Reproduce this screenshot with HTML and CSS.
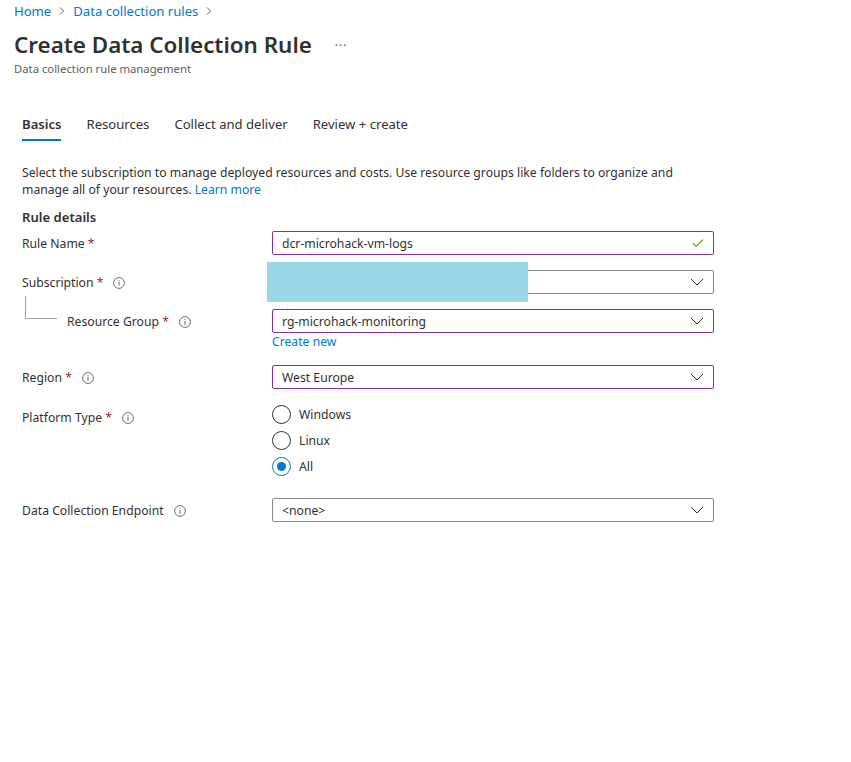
FILE: index.html
```html
<!DOCTYPE html>
<html lang="en">
<head>
<meta charset="utf-8">
<title>Create Data Collection Rule</title>
<link rel="stylesheet" href="styles.css">
</head>
<body>
<div class="page">
  <nav class="breadcrumb">
    <a class="crumb" href="#">Home</a>
    <svg class="crumb-sep" width="12" height="12" viewBox="0 0 12 12"><path d="M4 2.5 L7.5 6 L4 9.5" fill="none" stroke="#605e5c" stroke-width="1"/></svg>
    <a class="crumb" href="#">Data collection rules</a>
    <svg class="crumb-sep" width="12" height="12" viewBox="0 0 12 12"><path d="M4 2.5 L7.5 6 L4 9.5" fill="none" stroke="#605e5c" stroke-width="1"/></svg>
  </nav>
  <div class="title-row">
    <h1 class="title">Create Data Collection Rule</h1>
    <span class="more">&middot;&middot;&middot;</span>
  </div>
  <div class="subtitle">Data collection rule management</div>

  <div class="content">
    <div class="tabs">
      <div class="tab active">Basics</div>
      <div class="tab">Resources</div>
      <div class="tab">Collect and deliver</div>
      <div class="tab">Review + create</div>
    </div>

    <p class="desc">Select the subscription to manage deployed resources and costs. Use resource groups like folders to organize and manage all of your resources. <a href="#" class="link">Learn more</a></p>

    <h2 class="section">Rule details</h2>

    <div class="row r1">
      <div class="label">Rule Name <span class="req">*</span></div>
      <div class="control">
        <div class="input purple">
          <span class="value">dcr-microhack-vm-logs</span>
          <svg class="check" width="12" height="10" viewBox="0 0 12 10"><path d="M1 5.2 L4.2 8.4 L11 1.6" fill="none" stroke="#57a300" stroke-width="1.2"/></svg>
        </div>
      </div>
    </div>

    <div class="row r2">
      <div class="label">Subscription <span class="req">*</span><svg class="info" width="12" height="12" viewBox="0 0 12 12"><circle cx="6" cy="6" r="5.4" fill="none" stroke="#605e5c" stroke-width="0.9"/><rect x="5.5" y="5" width="1" height="3.6" fill="#605e5c"/><circle cx="6" cy="3.6" r="0.6" fill="#605e5c"/></svg></div>
      <div class="control">
        <div class="input gray">
          <span class="value"></span>
          <svg class="chev" width="14" height="8" viewBox="0 0 14 8"><path d="M1 1 L7 7 L13 1" fill="none" stroke="#323130" stroke-width="1"/></svg>
          <div class="redact"></div>
        </div>
      </div>
    </div>

    <div class="row r3">
      <div class="label sub">
        <span class="tree"></span>
        <span class="sub-text">Resource Group <span class="req">*</span><svg class="info" width="12" height="12" viewBox="0 0 12 12"><circle cx="6" cy="6" r="5.4" fill="none" stroke="#605e5c" stroke-width="0.9"/><rect x="5.5" y="5" width="1" height="3.6" fill="#605e5c"/><circle cx="6" cy="3.6" r="0.6" fill="#605e5c"/></svg></span>
      </div>
      <div class="control">
        <div class="input purple">
          <span class="value">rg-microhack-monitoring</span>
          <svg class="chev" width="14" height="8" viewBox="0 0 14 8"><path d="M1 1 L7 7 L13 1" fill="none" stroke="#323130" stroke-width="1"/></svg>
        </div>
        <a href="#" class="link create">Create new</a>
      </div>
    </div>

    <div class="row r4">
      <div class="label">Region <span class="req">*</span><svg class="info" width="12" height="12" viewBox="0 0 12 12"><circle cx="6" cy="6" r="5.4" fill="none" stroke="#605e5c" stroke-width="0.9"/><rect x="5.5" y="5" width="1" height="3.6" fill="#605e5c"/><circle cx="6" cy="3.6" r="0.6" fill="#605e5c"/></svg></div>
      <div class="control">
        <div class="input purple">
          <span class="value">West Europe</span>
          <svg class="chev" width="14" height="8" viewBox="0 0 14 8"><path d="M1 1 L7 7 L13 1" fill="none" stroke="#323130" stroke-width="1"/></svg>
        </div>
      </div>
    </div>

    <div class="row r5">
      <div class="label">Platform Type <span class="req">*</span><svg class="info" width="12" height="12" viewBox="0 0 12 12"><circle cx="6" cy="6" r="5.4" fill="none" stroke="#605e5c" stroke-width="0.9"/><rect x="5.5" y="5" width="1" height="3.6" fill="#605e5c"/><circle cx="6" cy="3.6" r="0.6" fill="#605e5c"/></svg></div>
      <div class="control radios">
        <div class="radio"><span class="circle"></span><span>Windows</span></div>
        <div class="radio"><span class="circle"></span><span>Linux</span></div>
        <div class="radio"><span class="circle on"></span><span>All</span></div>
      </div>
    </div>

    <div class="row r6">
      <div class="label">Data Collection Endpoint<svg class="info" width="12" height="12" viewBox="0 0 12 12"><circle cx="6" cy="6" r="5.4" fill="none" stroke="#605e5c" stroke-width="0.9"/><rect x="5.5" y="5" width="1" height="3.6" fill="#605e5c"/><circle cx="6" cy="3.6" r="0.6" fill="#605e5c"/></svg></div>
      <div class="control">
        <div class="input gray">
          <span class="value">&lt;none&gt;</span>
          <svg class="chev" width="14" height="8" viewBox="0 0 14 8"><path d="M1 1 L7 7 L13 1" fill="none" stroke="#323130" stroke-width="1"/></svg>
        </div>
      </div>
    </div>
  </div>
</div>
</body>
</html>
```

FILE: styles.css
```css
* { box-sizing: border-box; }
html, body { margin: 0; padding: 0; background: #fff; }
body {
  font-family: "Segoe UI", "Noto Sans", "Open Sans", sans-serif;
  color: #323130;
  font-size: 12.2px;
}
a { text-decoration: none; }
.page { padding: 0 14px; }

.breadcrumb {
  display: flex;
  align-items: center;
  height: 21px;
  padding-top: 1px;
  font-size: 13.1px;
  line-height: 20px;
}
.crumb { color: #0078d4; }
.crumb-sep { margin: 0 5px 0 5px; }

.title-row { display: flex; align-items: center; margin-top: 8px; height: 32px; }
.title {
  margin: 0;
  font-size: 22.4px;
  font-weight: 600;
  line-height: 32px;
  color: #323130;
}
.more { margin-left: 23px; color: #605e5c; font-size: 12px; letter-spacing: 1px; }
.subtitle { font-size: 11.3px; line-height: 16px; color: #605e5c; }

.content { padding-left: 8px; }

.tabs { display: flex; gap: 25px; margin-top: 37px; }
.tab {
  font-size: 13.1px;
  line-height: 20px;
  padding-bottom: 5px;
  border-bottom: 2px solid transparent;
  color: #323130;
}
.tab.active { font-weight: 600; border-bottom-color: #0078d4; }

.desc {
  margin: 23px 0 0;
  max-width: 692px;
  line-height: 17px;
  font-size: 12.2px;
}
.link { color: #0078d4; }

.section {
  margin: 9px 0 0;
  font-size: 13.1px;
  font-weight: 600;
  line-height: 20px;
}

.row { display: flex; align-items: flex-start; }
.r1 { margin-top: 4px; }
.r2, .r3 { margin-top: 15px; }
.r4 { margin-top: 15px; }
.r5 { margin-top: 16px; }
.r6 { margin-top: 22px; }

.label {
  width: 250px;
  flex: none;
  line-height: 22px;
  height: 24px;
  padding-top: 2px;
  white-space: nowrap;
}
.req { color: #a4262c; }
.info { margin-left: 10px; vertical-align: -2px; }
.label.sub { display: flex; align-items: flex-start; padding-top: 0; line-height: 24px; }
.sub-text { padding-top: 1px; }
.tree {
  display: block;
  flex: none;
  width: 32px;
  height: 23px;
  margin: -13px 10px 0 3px;
  border-left: 1px solid #a19f9d;
  border-bottom: 1px solid #a19f9d;
}

.control { width: 442px; flex: none; display: flex; flex-direction: column; }
.input {
  position: relative;
  height: 24px;
  display: flex;
  align-items: center;
  justify-content: space-between;
  padding: 0 8px 0 9px;
  border: 1px solid #8a8886;
  border-radius: 2px;
  font-size: 12.2px;
}
.input.purple { border-color: #8a2da5; }
.input.gray { border-color: #8a8886; }
.check { margin-right: 1px; }
.chev { margin-right: 1px; }
.redact {
  position: absolute;
  left: -6px;
  top: -9px;
  width: 261px;
  height: 40px;
  background: #9ad8e8;
}
.create { line-height: 17px; margin-top: 0; }

.radios { gap: 6px; margin-top: -1px; }
.radio { display: flex; align-items: center; height: 20px; gap: 8px; }
.circle {
  width: 19px;
  height: 19px;
  border: 1px solid #323130;
  border-radius: 50%;
  flex: none;
  display: flex;
  align-items: center;
  justify-content: center;
}
.circle.on { border-color: #0078d4; }
.circle.on::after {
  content: "";
  width: 9px;
  height: 9px;
  border-radius: 50%;
  background: #0078d4;
}
```
